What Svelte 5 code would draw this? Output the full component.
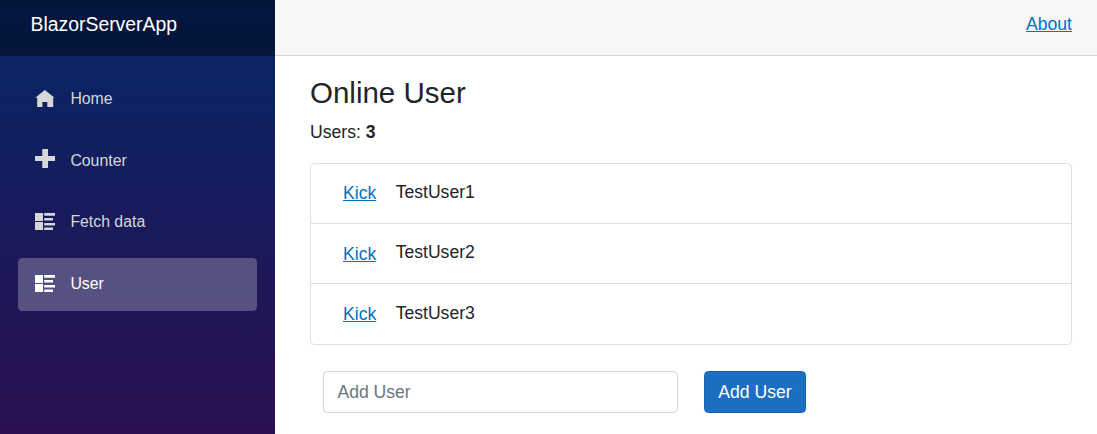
<script>
  const navigation = [
    { label: 'Home', icon: 'home' },
    { label: 'Counter', icon: 'plus' },
    { label: 'Fetch data', icon: 'list' },
    { label: 'User', icon: 'list', active: true }
  ];
  let users = $state(['TestUser1', 'TestUser2', 'TestUser3']);
  let name = $state('');

  function kick(user) {
    users = users.filter((entry) => entry !== user);
  }

  function addUser() {
    if (name.trim()) {
      users = [...users, name.trim()];
      name = '';
    }
  }
</script>

<div class="page">
  <aside class="sidebar">
    <div class="brand"><span>BlazorServerApp</span></div>
    <nav>
      {#each navigation as item}
        <a class="nav-link" class:active={item.active} href="#top">
          <svg class="icon" viewBox="0 0 20 20" fill="currentColor" aria-hidden="true">
            {#if item.icon === 'home'}
              <path d="M9.8 1 .3 8.7H2.2V18h5.2v-5h4.9v5h5.9V8.7h1.3z" />
            {:else if item.icon === 'plus'}
              <path d="M7.3-1H13v7h7v5h-7v7H7.3v-7H0V6h7.3z" />
            {:else}
              <path d="M0 1h8v8H0zM0 10h8v8H0zM9.2 1H20v2.7H9.2zM9.2 6H18v2.5H9.2zM9.2 11H20v2.5H9.2zM9.2 15.6H18V18H9.2z" />
            {/if}
          </svg>
          <span>{item.label}</span>
        </a>
      {/each}
    </nav>
  </aside>

  <main>
    <header><a href="#about">About</a></header>
    <section class="content">
      <h3>Online User</h3>
      <p>Users: <b>{users.length}</b></p>
      <ul>
        {#each users as user}
          <li>
            <button class="kick" onclick={() => kick(user)}>Kick</button>
            <span>{user}</span>
          </li>
        {/each}
      </ul>
      <div class="add">
        <input placeholder="Add User" bind:value={name} />
        <button class="primary" onclick={addUser}>Add User</button>
      </div>
    </section>
  </main>
</div>

<style>
  :global(body) {
    overflow: hidden;
    background: #fff;
  }
  .page, .page * {
    box-sizing: border-box;
  }
  .page {
    display: flex;
    height: 434px;
    font: 17.6px/26.4px "Liberation Sans", Arial, sans-serif;
    color: #212529;
  }
  .sidebar {
    width: 275px;
    flex: none;
    background: linear-gradient(180deg, rgb(5, 39, 103) 0, #3a0647 610px);
  }
  .brand {
    height: 56px;
    padding: 10px 30.6px 0;
    background: rgba(0, 0, 0, 0.4);
    color: #fff;
    font-size: 19.36px;
    line-height: 29px;
  }
  nav {
    display: flex;
    flex-direction: column;
    gap: 8.8px;
    padding: 17.6px 18px 0;
  }
  .nav-link {
    display: flex;
    align-items: center;
    height: 52.8px;
    padding-left: 17px;
    border-radius: 4.4px;
    color: #d7d7d7;
    font-size: 15.84px;
    line-height: 24px;
    text-decoration: none;
  }
  .nav-link span {
    position: relative;
    top: -0.7px;
  }
  .nav-link.active {
    background: rgba(255, 255, 255, 0.25);
    color: #fff;
  }
  .icon {
    position: relative;
    top: -1.2px;
    width: 20px;
    height: 20px;
    margin-right: 15.4px;
    overflow: visible;
  }
  main {
    flex: 1;
  }
  header {
    display: flex;
    justify-content: flex-end;
    height: 56px;
    padding: 11px 25px 0 0;
    background: #f7f7f7;
    border-bottom: 1px solid #d6d5d5;
  }
  header a, .kick {
    color: #0071c1;
    text-decoration: underline;
  }
  .content {
    padding: 19px 25px 0 35px;
  }
  h3 {
    margin: 0 0 8px;
    font-size: 29.5px;
    font-weight: 400;
    line-height: 36px;
  }
  p {
    margin: 0;
  }
  ul {
    margin: 18px 0 26px;
    padding: 0;
    list-style: none;
    border: 1px solid #dfdfdf;
    border-radius: 4.4px;
  }
  li {
    display: flex;
    height: 60px;
    padding: 15px 0 0 32px;
  }
  li:first-child {
    height: 59px;
  }
  li:last-child {
    height: 61px;
    padding-top: 16px;
  }
  li + li {
    border-top: 1px solid #dfdfdf;
  }
  li span {
    margin-left: 19.4px;
  }
  button, input {
    font: inherit;
  }
  .kick {
    height: 28px;
    padding: 0;
    border: 0;
    background: none;
    cursor: pointer;
  }
  li:nth-child(2) .kick {
    height: 30px;
  }
  .add {
    display: flex;
    gap: 26px;
    padding-left: 13px;
  }
  input {
    width: 355px;
    height: 42px;
    padding: 6px 13.4px;
    border: 1px solid #ced4da;
    border-radius: 4.4px;
    outline: 0;
    color: #495057;
  }
  input::placeholder {
    color: #6c757d;
    opacity: 1;
  }
  .primary {
    width: 102px;
    height: 42px;
    padding: 0;
    border: 1px solid #1861ac;
    border-radius: 4.4px;
    background: #1b6ec2;
    color: #fff;
  }
</style>
